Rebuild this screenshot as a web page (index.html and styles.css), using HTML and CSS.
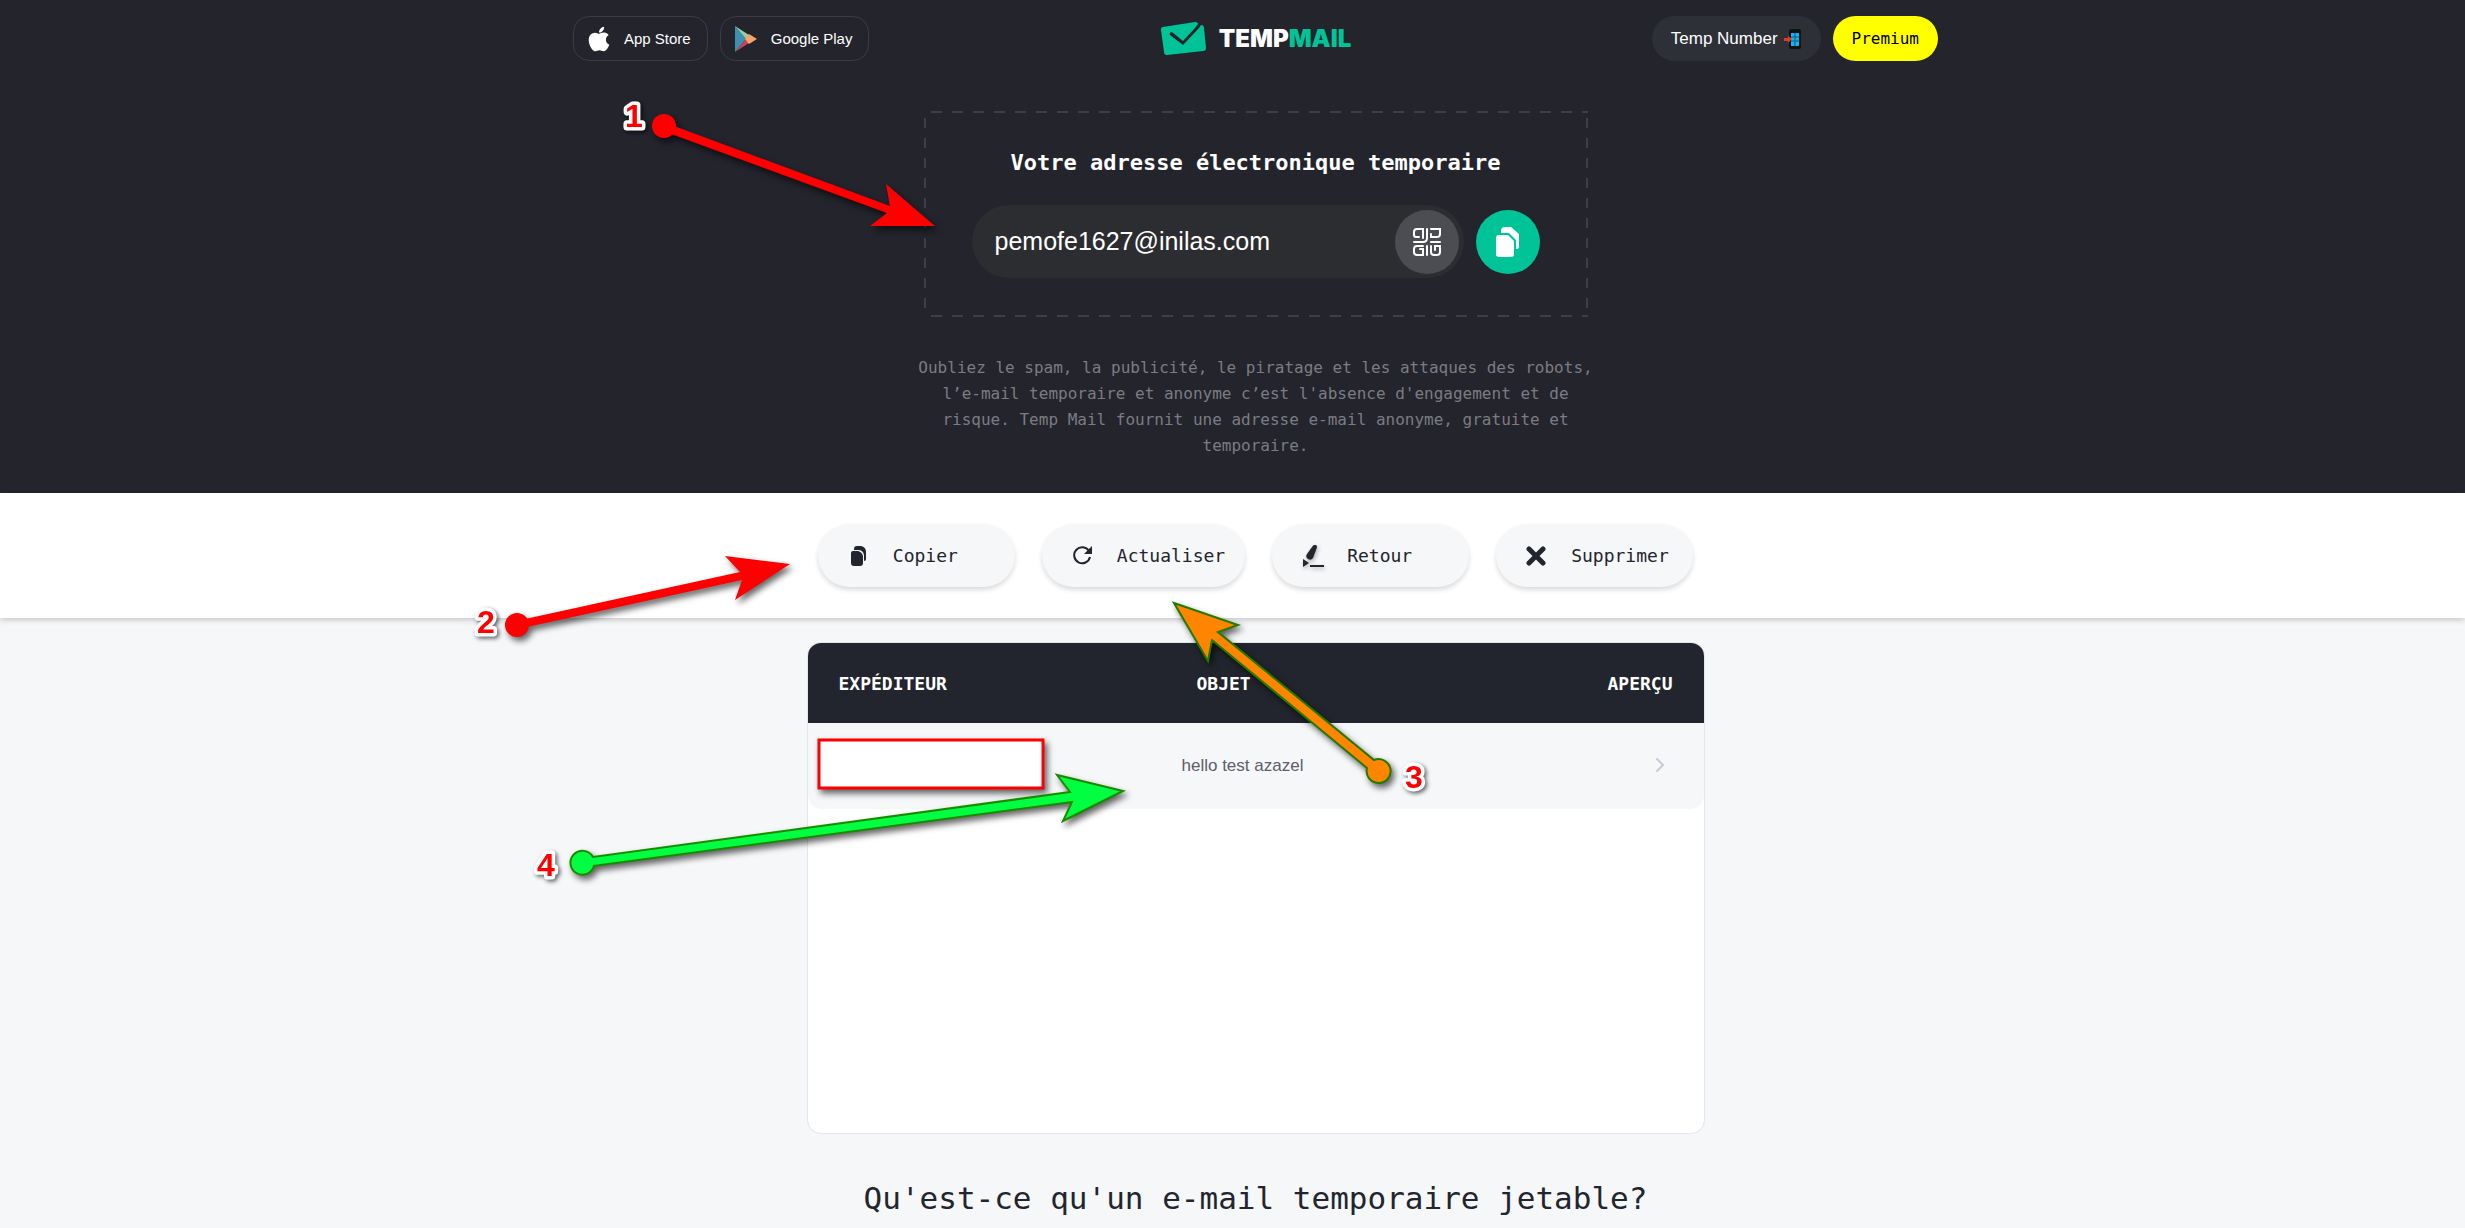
FILE: index.html
```html
<!DOCTYPE html>
<html lang="fr">
<head>
    <meta charset="UTF-8">
    <meta name="viewport" content="width=device-width, initial-scale=1.0">
    <title>Temp Mail</title>
    <link rel="stylesheet" href="styles.css">
</head>
<body>

<header class="hero">
    <nav class="topbar">
        <div class="stores">
            <a class="store" href="#">
                <svg width="22" height="28" viewBox="0 0 384 512" fill="#fff"><path d="M318.7 268.7c-.2-36.7 16.4-64.4 50-84.8-18.8-26.9-47.2-41.7-84.7-44.6-35.5-2.8-74.3 20.7-88.5 20.7-15 0-49.4-19.7-76.4-19.7C63.3 141.2 4 184.8 4 273.5q0 39.3 14.4 81.2c12.8 36.7 59 126.7 107.2 125.2 25.2-.6 43-17.9 75.8-17.9 31.8 0 48.3 17.9 76.4 17.9 48.6-.7 90.4-82.5 102.6-119.3-65.2-30.7-61.7-90-61.7-91.9zm-56.6-164.2c27.3-32.4 24.8-61.9 24-72.5-24.1 1.4-52 16.4-67.9 34.9-17.5 19.8-27.8 44.3-25.6 71.9 26.1 2 49.9-11.4 69.5-34.3z"/></svg>
                App Store
            </a>
            <a class="store" href="#">
                <svg width="22" height="26" viewBox="0 0 22 26">
                    <path d="M0 0v26l11-13z" fill="#3f8fb0"/>
                    <path d="M0 0l14 9-3 4z" fill="#8fd0a8"/>
                    <path d="M0 26l14-9-3-4z" fill="#c8415f"/>
                    <path d="M14 8l8 5-8 5-4-5z" fill="#f8a468"/>
                </svg>
                Google Play
            </a>
        </div>

        <a class="logo" href="#">
            <svg width="46" height="34" viewBox="0 0 46 34">
                <path d="M3 5L35 0q3 0 3 2l-3 4-12 13-11-9q-3 0-2 3l13 10 16-17 2-3q3 0 3 3l2 20q0 3-3 3L7 33q-3 0-3-3L1 8q0-3 2-3z" fill="#00c497"/>
            </svg>
            <span class="logo-text">TEMP<span class="logo-mail">MAIL</span></span>
        </a>

        <div class="links">
            <a class="number" href="#">
                Temp Number
                <svg width="18" height="20" viewBox="0 0 18 20">
                    <rect x="5" y="0" width="12" height="20" rx="2" fill="#111"/>
                    <rect x="7" y="4" width="8" height="13" fill="#12b4ee"/>
                    <path d="M7 8h8M7 12h8M11 4v13" stroke="#0b5f85" stroke-width="1"/>
                    <path d="M0 9h4V7l4 3-4 4v-2H0z" fill="#e5391f"/>
                </svg>
            </a>
            <a class="premium" href="#">Premium</a>
        </div>
    </nav>

    <form class="mailbox">
        <label class="mailbox-title" for="mail">Votre adresse électronique temporaire</label>
        <div class="mailbox-row">
            <div class="mail-field">
                <input type="text" id="mail" value="pemofe1627@inilas.com" readonly>
                <button type="button" class="round qr" aria-label="QR code">
                    <svg width="28" height="28" viewBox="0 0 28 28" fill="none" stroke="#fff" stroke-width="2" stroke-linecap="round">
                        <path d="M6 9H3q-2 0-2-2V4q0-3 3-3h6v9M14 1v9q0 4-4 4H1M18 1h9v5q0 3-3 3h-6V6M18 14h9M10 18H4q-3 0-3 3v3q0 3 3 3h6v-6H7M14 18v9M18 18v6q0 3 3 3h3q3 0 3-3v-6h-5v4"/>
                    </svg>
                </button>
            </div>
            <button type="button" class="round copy" aria-label="Copier l'adresse">
                <svg width="24" height="30" viewBox="0 0 24 30" fill="#fff">
                    <path d="M5 6V4q0-4 4-4h6l8 7v13q0 2-3 2V13l-7-7z"/>
                    <path d="M3 8h9l6 6v13q0 3-3 3H3q-3 0-3-3V11q0-3 3-3z"/>
                </svg>
            </button>
        </div>
    </form>

    <p class="intro">Oubliez le spam, la publicité, le piratage et les attaques des robots, l’e-mail temporaire et anonyme c’est l'absence d'engagement et de risque. Temp Mail fournit une adresse e-mail anonyme, gratuite et temporaire.</p>
</header>

<div class="actions">
    <button type="button">
        <svg width="20" height="20" viewBox="0 0 20 20" fill="#22252d">
            <path d="M6 4V3q0-3 3-3h4q5 1 5 6v7q0 2-2 2V9q-1-5-6-5z"/>
            <path d="M5 5h5q4 1 5 5v7q0 3-3 3H6q-3 0-3-3V7q0-2 2-2z"/>
        </svg>
        Copier
    </button>
    <button type="button">
        <svg width="20" height="20" viewBox="0 0 20 20">
            <path d="M17 5A8 8 0 1 0 18 11" fill="none" stroke="#22252d" stroke-width="2"/>
            <path d="M20 0v8h-8z" fill="#22252d"/>
        </svg>
        Actualiser
    </button>
    <button type="button">
        <svg class="pen" width="22" height="22" viewBox="0 0 22 22" fill="#22252d">
            <path d="M10 2q2-3 4-2t0 5l-3 8q-2 3-5 1-3-2-1-5z"/>
            <path d="M1 14l6 4-6 4z"/>
            <path d="M8 20h14v2H8z"/>
        </svg>
        Retour
    </button>
    <button type="button">
        <svg width="20" height="20" viewBox="0 0 20 20">
            <path d="M3 3l14 14M17 3L3 17" stroke="#22252d" stroke-width="5" stroke-linecap="round"/>
        </svg>
        Supprimer
    </button>
</div>

<main>
    <div class="inbox">
        <table>
            <thead>
                <tr>
                    <th class="from">Expéditeur</th>
                    <th class="subject">Objet</th>
                    <th class="view">Aperçu</th>
                </tr>
            </thead>
            <tbody>
                <tr>
                    <td class="from"></td>
                    <td class="subject">hello test azazel</td>
                    <td class="view">
                        <a href="#" aria-label="Aperçu">
                            <svg width="8" height="16" viewBox="0 0 8 16" fill="none" stroke="#c9cad6" stroke-width="2" stroke-linecap="round"><path d="M1 1l6 6-6 6"/></svg>
                        </a>
                    </td>
                </tr>
            </tbody>
        </table>
    </div>

    <h2>Qu'est-ce qu'un e-mail temporaire jetable?</h2>
</main>

<!-- Tutorial steps drawn over the page -->
<svg class="notes" viewBox="0 0 2465 1228">
    <rect class="mask" x="819" y="740" width="224" height="48"/>
    <g class="arrow red">
        <circle cx="664" cy="126" r="12"/>
        <path d="M666 123L890 206L886 184L935 226L870 226L887 213L663 131z"/>
    </g>
    <g class="arrow red">
        <circle cx="517" cy="625" r="12"/>
        <path d="M516 621L740 572L725 556L790 564L735 600L742 580L518 629z"/>
    </g>
    <g class="arrow orange">
        <path d="M1174 603L1238 625L1218 632L1374 760A12 12 0 1 1 1367 768L1212 640L1208 661z"/>
    </g>
    <g class="arrow green">
        <path d="M1123 791L1057 775L1070 792L593 857A12 12 0 1 0 594 866L1072 802L1063 821z"/>
    </g>
    <text x="625" y="127">1</text>
    <text x="477" y="633">2</text>
    <text x="1405" y="788">3</text>
    <text x="537" y="876">4</text>
</svg>

</body>
</html>
```
FILE: styles.css
```css
* {
    box-sizing: border-box;
}

body {
    margin: 0;
    position: relative;
    overflow-x: hidden;
    background: #f5f7f9;
    color: #22252d;
    font-family: "DejaVu Sans Mono", monospace;
    font-size: 18px;
}

a {
    color: inherit;
    text-decoration: none;
}

button {
    border: none;
    padding: 0;
    font: inherit;
    color: inherit;
    cursor: pointer;
}

svg {
    display: block;
    flex-shrink: 0;
}

.hero,
.actions,
main {
    padding-left: 46px;
}

/* Dark top part */
.hero {
    padding-top: 16px;
    padding-bottom: 34px;
    background: #23242c;
    color: #fff;
}

.topbar {
    display: grid;
    grid-template-columns: 1fr auto 1fr;
    align-items: center;
    max-width: 1365px;
    margin: 0 auto;
    font-family: "Liberation Sans", Arial, sans-serif;
}

.stores,
.links {
    display: flex;
    gap: 12px;
}

.links {
    justify-content: flex-end;
}

.store,
.number,
.premium {
    display: flex;
    align-items: center;
    height: 45px;
    border-radius: 23px;
}

.store {
    gap: 14px;
    padding: 0 16px 0 14px;
    border: 1px solid #3b3c46;
    border-radius: 16px;
    font-size: 15px;
}

.number {
    gap: 6px;
    padding: 0 19px;
    background: #2d3037;
    font-size: 17px;
}

.premium {
    padding: 0 19px;
    background: #ffff00;
    color: #000;
    font-family: "DejaVu Sans Mono", monospace;
    font-size: 16px;
}

.logo {
    display: flex;
    align-items: center;
    gap: 13px;
}

.logo-text {
    font-family: Inter, sans-serif;
    font-size: 24px;
    font-weight: 900;
}

.logo-mail {
    color: #00c497;
}

/* Address box, with long dashes on the four sides */
.mailbox {
    width: fit-content;
    margin: 50px auto 0;
    padding: 39px 48px;
    background:
        repeating-linear-gradient(90deg, transparent 0 7px, #3d3e48 7px 18px, transparent 18px 21px) top / 100% 2px no-repeat,
        repeating-linear-gradient(90deg, transparent 0 7px, #3d3e48 7px 18px, transparent 18px 21px) bottom / 100% 2px no-repeat,
        repeating-linear-gradient(transparent 0 7px, #3d3e48 7px 17px, transparent 17px 20px) left / 2px 100% no-repeat,
        repeating-linear-gradient(transparent 0 7px, #3d3e48 7px 17px, transparent 17px 20px) right / 2px 100% no-repeat;
}

.mailbox-title {
    display: block;
    margin-bottom: 29px;
    line-height: 26px;
    font-size: 22px;
    font-weight: bold;
    text-align: center;
}

.mailbox-row {
    display: flex;
    align-items: center;
    gap: 12px;
}

.mail-field {
    display: flex;
    align-items: center;
    width: 492px;
    height: 73px;
    padding: 0 5px 0 23px;
    border-radius: 37px;
    background: #2c2d31;
}

.mail-field input {
    flex: 1;
    min-width: 0;
    padding: 0;
    border: none;
    outline: none;
    background: none;
    color: #fff;
    font-family: "Liberation Sans", Arial, sans-serif;
    font-size: 25px;
}

.round {
    display: flex;
    align-items: center;
    justify-content: center;
    width: 64px;
    height: 64px;
    border-radius: 50%;
}

.qr {
    background: #4c4d52;
}

.copy {
    background: #00c497;
}

.intro {
    max-width: 680px;
    margin: 38px auto 0;
    color: #7b7c82;
    font-size: 16px;
    line-height: 26px;
    text-align: center;
}

/* Buttons */
.actions {
    position: relative;
    display: flex;
    justify-content: center;
    gap: 27px;
    padding-top: 31px;
    padding-bottom: 31px;
    background: #fff;
    box-shadow: 0 2px 6px rgba(0, 0, 0, 0.2);
}

.actions button {
    display: flex;
    align-items: center;
    gap: 25px;
    min-width: 197px;
    height: 63px;
    padding: 0 20px 0 30px;
    border-radius: 32px;
    background: #f5f7f9;
    box-shadow: 0 3px 5px rgba(0, 0, 0, 0.14);
}

.actions .pen {
    margin-right: -2px;
    filter: drop-shadow(1px 2px 2px rgba(0, 0, 0, 0.3));
}

/* Inbox */
.inbox {
    max-width: 898px;
    min-height: 492px;
    margin: 24px auto 0;
    border: 1px solid #e4e5ee;
    border-radius: 14px;
    overflow: hidden;
    background: #fff;
}

table {
    width: 100%;
    border-collapse: separate;
    border-spacing: 0;
    table-layout: fixed;
}

th {
    height: 80px;
    padding: 0;
    background: #22252d;
    color: #fff;
    text-align: left;
    text-transform: uppercase;
}

td {
    height: 86px;
    padding: 0;
    background: #f5f7f9;
    color: #5c5e68;
    font-family: "Liberation Sans", Arial, sans-serif;
    font-size: 17px;
}

td.from {
    border-bottom-left-radius: 14px;
}

td.view {
    padding-right: 40px;
    border-bottom-right-radius: 14px;
}

td.view a {
    display: flex;
    justify-content: flex-end;
}

th.from {
    width: 374px;
    padding-left: 31px;
}

th.subject {
    padding-left: 15px;
}

th.view {
    padding-right: 31px;
    text-align: right;
}

h2 {
    margin: 44px 0 0;
    font-size: 31px;
    font-weight: normal;
    line-height: 40px;
    text-align: center;
}

/* Notes */
.notes {
    position: absolute;
    top: 0;
    left: 0;
    width: 100%;
    pointer-events: none;
}

.mask,
.arrow {
    filter: drop-shadow(3px 4px 3px rgba(0, 0, 0, 0.6));
}

.mask {
    fill: #fff;
    stroke: #f00;
    stroke-width: 3;
}

.red {
    fill: #f00;
}

.orange {
    fill: #ff8400;
    stroke: #237a00;
    stroke-width: 2;
}

.green {
    fill: #00ff40;
    stroke: #1c8a00;
    stroke-width: 2;
}

.notes text {
    fill: #f00;
    stroke: #fff;
    stroke-width: 7;
    stroke-linejoin: round;
    paint-order: stroke;
    font-family: "Liberation Sans", Arial, sans-serif;
    font-size: 32px;
    font-weight: bold;
    filter: drop-shadow(2px 2px 2px rgba(0, 0, 0, 0.6));
}
```
